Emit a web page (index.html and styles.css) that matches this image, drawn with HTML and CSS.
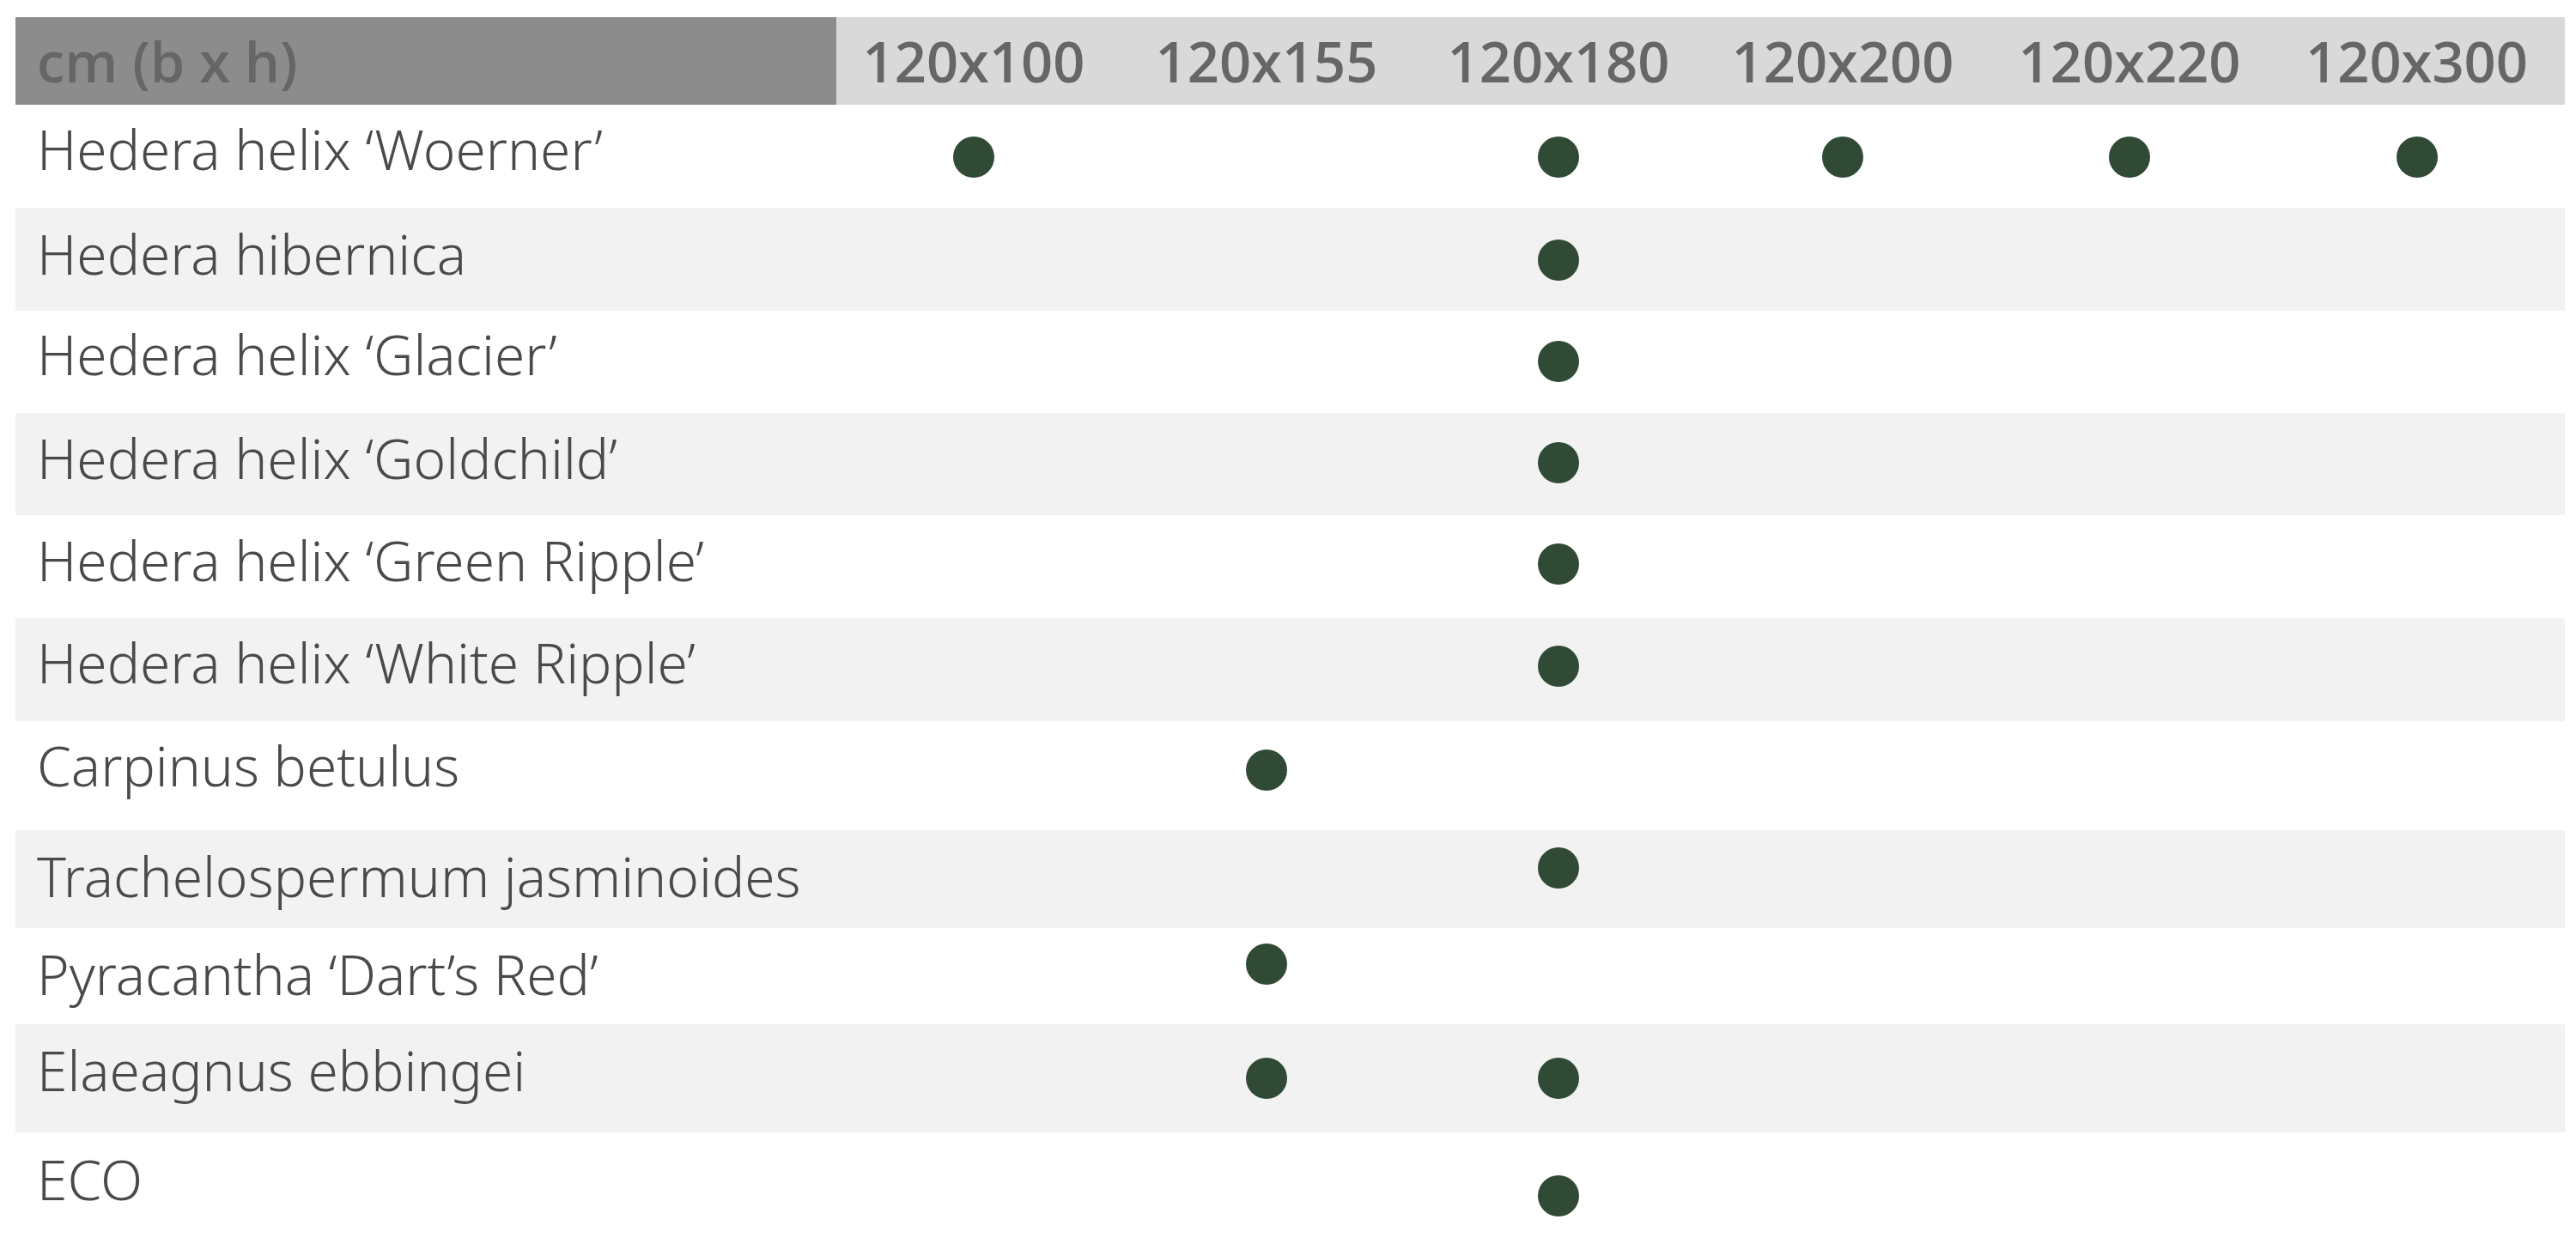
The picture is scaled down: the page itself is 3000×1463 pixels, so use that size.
FILE: index.html
```html
<!DOCTYPE html>
<html lang="de">
<head>
<meta charset="utf-8">
<title>Sortiment</title>
<link rel="stylesheet" href="styles.css">
</head>
<body>
<div class="table">
  <div class="row head">
    <div class="name head-name">cm (b x h)</div>
    <div class="size">120x100</div>
    <div class="size">120x155</div>
    <div class="size">120x180</div>
    <div class="size">120x200</div>
    <div class="size">120x220</div>
    <div class="size">120x300</div>
  </div>

  <div class="row r1">
    <div class="name">Hedera helix ‘Woerner’</div>
    <div class="cell"><span class="dot"></span></div>
    <div class="cell"></div>
    <div class="cell"><span class="dot"></span></div>
    <div class="cell"><span class="dot"></span></div>
    <div class="cell"><span class="dot"></span></div>
    <div class="cell"><span class="dot"></span></div>
  </div>

  <div class="row r2 alt">
    <div class="name">Hedera hibernica</div>
    <div class="cell"></div>
    <div class="cell"></div>
    <div class="cell"><span class="dot"></span></div>
    <div class="cell"></div>
    <div class="cell"></div>
    <div class="cell"></div>
  </div>

  <div class="row r3">
    <div class="name">Hedera helix ‘Glacier’</div>
    <div class="cell"></div>
    <div class="cell"></div>
    <div class="cell"><span class="dot"></span></div>
    <div class="cell"></div>
    <div class="cell"></div>
    <div class="cell"></div>
  </div>

  <div class="row r4 alt">
    <div class="name">Hedera helix ‘Goldchild’</div>
    <div class="cell"></div>
    <div class="cell"></div>
    <div class="cell"><span class="dot"></span></div>
    <div class="cell"></div>
    <div class="cell"></div>
    <div class="cell"></div>
  </div>

  <div class="row r5">
    <div class="name">Hedera helix ‘Green Ripple’</div>
    <div class="cell"></div>
    <div class="cell"></div>
    <div class="cell"><span class="dot"></span></div>
    <div class="cell"></div>
    <div class="cell"></div>
    <div class="cell"></div>
  </div>

  <div class="row r6 alt">
    <div class="name">Hedera helix ‘White Ripple’</div>
    <div class="cell"></div>
    <div class="cell"></div>
    <div class="cell"><span class="dot"></span></div>
    <div class="cell"></div>
    <div class="cell"></div>
    <div class="cell"></div>
  </div>

  <div class="row r7">
    <div class="name">Carpinus betulus</div>
    <div class="cell"></div>
    <div class="cell"><span class="dot"></span></div>
    <div class="cell"></div>
    <div class="cell"></div>
    <div class="cell"></div>
    <div class="cell"></div>
  </div>

  <div class="row r8 alt">
    <div class="name">Trachelospermum jasminoides</div>
    <div class="cell"></div>
    <div class="cell"></div>
    <div class="cell"><span class="dot"></span></div>
    <div class="cell"></div>
    <div class="cell"></div>
    <div class="cell"></div>
  </div>

  <div class="row r9">
    <div class="name">Pyracantha ‘Dart’s Red’</div>
    <div class="cell"></div>
    <div class="cell"><span class="dot"></span></div>
    <div class="cell"></div>
    <div class="cell"></div>
    <div class="cell"></div>
    <div class="cell"></div>
  </div>

  <div class="row r10 alt">
    <div class="name">Elaeagnus ebbingei</div>
    <div class="cell"></div>
    <div class="cell"><span class="dot"></span></div>
    <div class="cell"><span class="dot"></span></div>
    <div class="cell"></div>
    <div class="cell"></div>
    <div class="cell"></div>
  </div>

  <div class="row r11">
    <div class="name">ECO</div>
    <div class="cell"></div>
    <div class="cell"></div>
    <div class="cell"><span class="dot"></span></div>
    <div class="cell"></div>
    <div class="cell"></div>
    <div class="cell"></div>
  </div>
</div>
</body>
</html>
```
FILE: styles.css
```css
html, body {
  margin: 0;
  padding: 0;
  background: #ffffff;
}

body {
  overflow: hidden;
}

.table {
  width: 2969px;
  margin: 20px 0 0 18px;
  display: flex;
  flex-direction: column;
}

.row {
  display: grid;
  grid-template-columns: 956px 320px 362px 318px 344px 324px 345px;
  height: var(--h, 120px);
  --txt: 21px;
  --dot: 35px;
}

.row.alt {
  background: #f2f2f2;
}

/* header */
.row.head {
  height: 102px;
  background: #d9d9d9;
}

.head-name {
  background: #8c8c8c;
}

.head .name,
.head .size {
  display: flex;
  align-items: center;
  padding-top: 0;
  font-family: "Open Sans", "Liberation Sans", sans-serif;
  font-weight: 600;
  font-size: 65px;
  line-height: 65px;
  color: #666666;
}

.head .size {
  justify-content: center;
}

/* plant names */
.name {
  padding: var(--txt) 0 0 25px;
  font-family: "Noto Sans", "Open Sans", sans-serif;
  font-weight: 300;
  font-size: 64px;
  line-height: 64px;
  color: #4a4a4a;
  white-space: nowrap;
}

/* dot cells */
.cell {
  display: flex;
  justify-content: center;
  align-items: flex-start;
  padding-top: var(--dot);
}

.dot {
  display: block;
  width: 48px;
  height: 48px;
  border-radius: 50%;
  background: #304a36;
}

/* per-row metrics */
.r1  { --h: 120px; --txt: 20px; --dot: 37px; }
.r2  { --h: 120px; --txt: 22px; --dot: 37px; }
.r3  { --h: 119px; --txt: 19px; --dot: 35px; }
.r4  { --h: 119px; --txt: 21px; --dot: 34px; }
.r5  { --h: 120px; --txt: 21px; --dot: 33px; }
.r6  { --h: 120px; --txt: 20px; --dot: 32px; }
.r7  { --h: 127px; --txt: 20px; --dot: 33px; }
.r8  { --h: 114px; --txt: 22px; --dot: 20px; }
.r9  { --h: 112px; --txt: 22px; --dot: 18px; }
.r10 { --h: 126px; --txt: 22px; --dot: 39px; }
.r11 { --h: 148px; --txt: 23px; --dot: 50px; }
```
